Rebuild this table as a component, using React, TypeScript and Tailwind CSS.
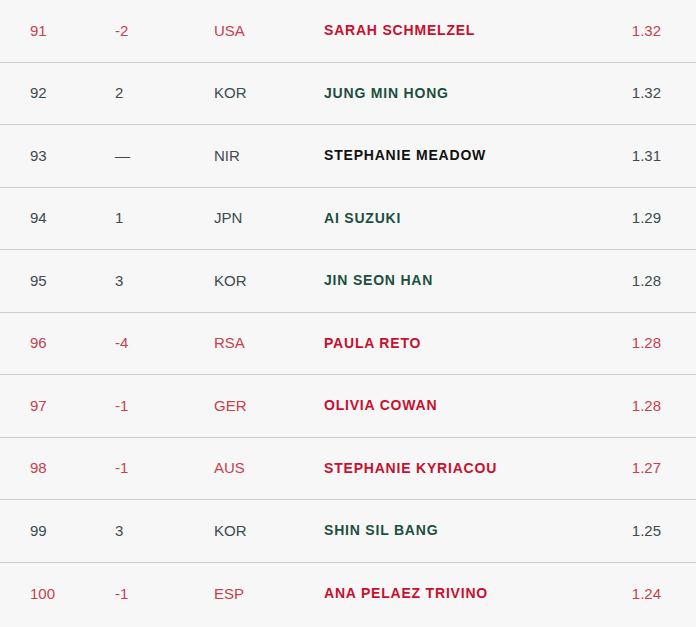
import * as React from "react";

type Row = {
  rank: number;
  move: string;
  country: string;
  name: string;
  points: string;
  tone: "down" | "up" | "same";
};

const rows: Row[] = [
  { rank: 91, move: "-2", country: "USA", name: "SARAH SCHMELZEL", points: "1.32", tone: "down" },
  { rank: 92, move: "2", country: "KOR", name: "JUNG MIN HONG", points: "1.32", tone: "up" },
  { rank: 93, move: "—", country: "NIR", name: "STEPHANIE MEADOW", points: "1.31", tone: "same" },
  { rank: 94, move: "1", country: "JPN", name: "AI SUZUKI", points: "1.29", tone: "up" },
  { rank: 95, move: "3", country: "KOR", name: "JIN SEON HAN", points: "1.28", tone: "up" },
  { rank: 96, move: "-4", country: "RSA", name: "PAULA RETO", points: "1.28", tone: "down" },
  { rank: 97, move: "-1", country: "GER", name: "OLIVIA COWAN", points: "1.28", tone: "down" },
  { rank: 98, move: "-1", country: "AUS", name: "STEPHANIE KYRIACOU", points: "1.27", tone: "down" },
  { rank: 99, move: "3", country: "KOR", name: "SHIN SIL BANG", points: "1.25", tone: "up" },
  { rank: 100, move: "-1", country: "ESP", name: "ANA PELAEZ TRIVINO", points: "1.24", tone: "down" },
];

const cellTone = {
  down: "text-[#c8414b]",
  up: "text-[#3d4a50]",
  same: "text-[#3d4a50]",
};

const nameTone = {
  down: "text-[#c8102e]",
  up: "text-[#1d4f40]",
  same: "text-[#111111]",
};

export default function App() {
  return (
    <div className="min-h-[627px] w-[696px] bg-[#f7f7f7] font-['Liberation_Sans',Arial,sans-serif]">
      {rows.map((r, i) => (
        <div
          key={r.rank}
          className={`flex h-[62.5px] items-center text-[15px] ${i < rows.length - 1 ? "border-b border-[#cccccc]" : ""}`}
        >
          <span className={`w-[115px] pl-[30px] ${cellTone[r.tone]}`}>{r.rank}</span>
          <span className={`w-[99px] ${cellTone[r.tone]}`}>{r.move}</span>
          <span className={`w-[110px] ${cellTone[r.tone]}`}>{r.country}</span>
          <span className={`flex-1 text-[14px] font-bold tracking-[0.8px] ${nameTone[r.tone]}`}>{r.name}</span>
          <span className={`pr-[35px] ${cellTone[r.tone]}`}>{r.points}</span>
        </div>
      ))}
    </div>
  );
}
